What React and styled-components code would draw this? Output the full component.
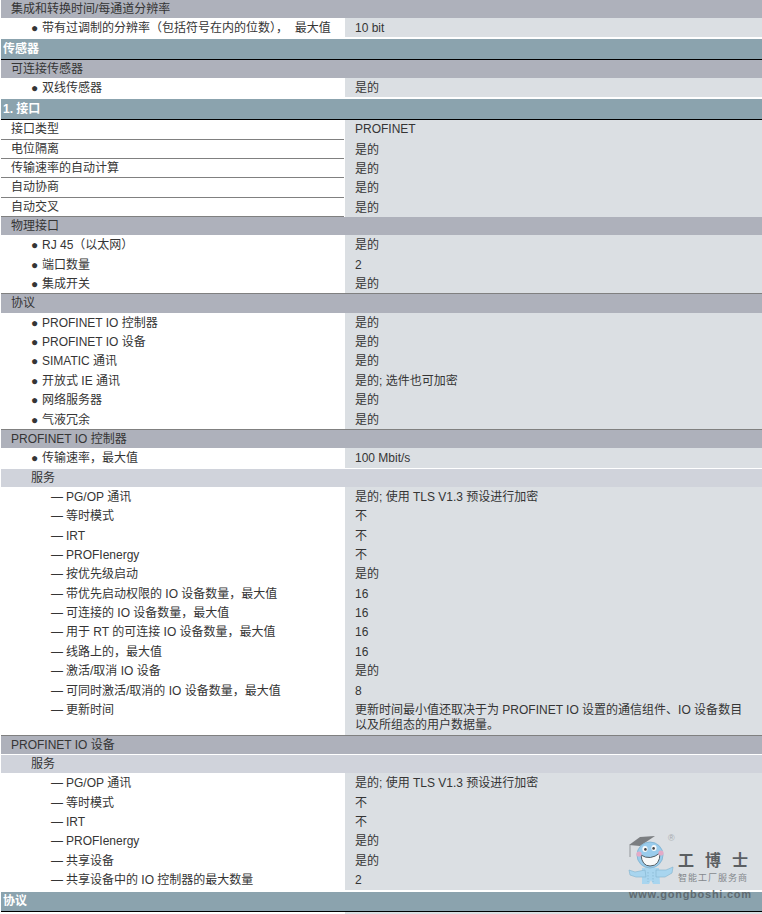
import React from 'react';
import styled, { createGlobalStyle } from 'styled-components';

const Global = createGlobalStyle`
  html, body { margin: 0; padding: 0; background: #fff; }
  body { font-family: "Liberation Sans", "Noto Sans CJK SC", sans-serif; font-size: 12px; color: #353535; }
`;

const Page = styled.div`
  position: relative;
  width: 762px;
  height: 914px;
  overflow: hidden;
  padding-left: 1px;
  box-sizing: border-box;
`;

const Section = styled.div`
  height: ${p => p.$h}px;
  line-height: ${p => p.$h}px;
  margin-top: 2px;
  padding-left: 2px;
  background: #8ba3ae;
  border-bottom: 1px solid #000;
  color: #fff;
  font-weight: bold;
`;

const Group = styled.div`
  height: ${p => p.$h || 18}px;
  line-height: 18px;
  padding-left: ${p => (p.$light ? 30 : 10)}px;
  margin-top: ${p => p.$mt || 0}px;
  background: ${p => (p.$light ? '#d0d3db' : '#aeb1bb')};
  border-top: ${p => (p.$rule ? '1px solid #808080' : 'none')};
`;

const Row = styled.div`
  display: grid;
  grid-template-columns: 344px 1fr;
  grid-template-rows: ${p => p.$h}px;
`;

const Label = styled.div`
  display: flex;
  gap: 3px;
  padding-left: ${p => ({ plain: 10, bullet: 30, dash: 50 }[p.$kind])}px;
  line-height: ${p => p.$lh}px;
  margin-right: 1px;
  border-bottom: ${p => (p.$rule ? '1px solid #808080' : 'none')};
  white-space: pre;
`;

const Mark = styled.span`
  flex: none;
  width: ${p => (p.$kind === 'bullet' ? 8 : 12)}px;
`;

const Value = styled.div`
  padding: ${p => (p.$wrap ? '3px 15px 0 10px' : '0 10px')};
  line-height: ${p => (p.$wrap ? 15 : p.$lh)}px;
  margin-bottom: ${p => p.$gap || 0}px;
  background: #dbdfe3;
`;

const Watermark = styled.div`
  position: absolute;
  left: 628px;
  top: 834px;
  width: 122px;
  display: flex;
  flex-direction: column;
  opacity: .82;
`;

const MarkRow = styled.div`
  display: flex;
  height: 56px;
`;

const BrandBlock = styled.div`
  display: flex;
  flex-direction: column;
  padding-top: 17px;
`;

const Brand = styled.div`
  font-family: "Liberation Serif", "Noto Sans CJK SC", serif;
  font-size: 16px;
  font-weight: 700;
  letter-spacing: 11px;
  line-height: 19px;
  color: #3f4346;
  white-space: nowrap;
`;

const Slogan = styled.div`
  margin-top: 2px;
  font-family: "Noto Sans CJK SC", sans-serif;
  font-size: 9px;
  letter-spacing: 1px;
  line-height: 11px;
  color: #707478;
  white-space: nowrap;
`;

const Site = styled.div`
  margin: -2px 0 0 1px;
  font-size: 11px;
  font-weight: bold;
  letter-spacing: .74px;
  line-height: 12px;
  color: #565e63;
  white-space: nowrap;
`;

const lineFor = (kind, h) => {
  if (kind === 'bullet') return 20;
  if (kind === 'dash') return Math.min(h, 20) + 2;
  return h;
};

const S = (text, h = 20) => ({ t: 's', text, h });
const G = (text, o = {}) => ({ t: 'g', text, ...o });
const R = (kind, l, v, h = 19, o = {}) => ({ t: 'r', kind, l, v, h, lh: lineFor(kind, h), ...o });
const P = (l, v, h, vlh = 20) => R('plain', l, v, h, { rule: true, lh: 19, vlh });

const rows = [
  G('集成和转换时间/每通道分辨率'),
  R('bullet', '带有过调制的分辨率（包括符号在内的位数），  最大值', '10 bit', 19, { lh: 21 }),
  S('传感器'),
  G('可连接传感器'),
  R('bullet', '双线传感器', '是的'),
  S('1. 接口'),
  P('接口类型', 'PROFINET', 20, 19),
  P('电位隔离', '是的', 19),
  P('传输速率的自动计算', '是的', 19),
  P('自动协商', '是的', 20),
  P('自动交叉', '是的', 19),
  G('物理接口'),
  R('bullet', 'RJ 45（以太网）', '是的', 20),
  R('bullet', '端口数量', '2'),
  R('bullet', '集成开关', '是的'),
  G('协议', { rule: true, h: 19 }),
  R('bullet', 'PROFINET IO 控制器', '是的'),
  R('bullet', 'PROFINET IO 设备', '是的'),
  R('bullet', 'SIMATIC 通讯', '是的', 20),
  R('bullet', '开放式 IE 通讯', '是的; 选件也可加密'),
  R('bullet', '网络服务器', '是的', 20),
  R('bullet', '气液冗余', '是的'),
  G('PROFINET IO 控制器', { rule: true }),
  R('bullet', '传输速率，最大值', '100 Mbit/s', 21, { gap: 1, lh: 20 }),
  G('服务', { light: true }),
  R('dash', 'PG/OP 通讯', '是的; 使用 TLS V1.3 预设进行加密'),
  R('dash', '等时模式', '不'),
  R('dash', 'IRT', '不', 20),
  R('dash', 'PROFIenergy', '不'),
  R('dash', '按优先级启动', '是的'),
  R('dash', '带优先启动权限的 IO 设备数量，最大值', '16', 20),
  R('dash', '可连接的 IO 设备数量，最大值', '16'),
  R('dash', '用于 RT 的可连接 IO 设备数量，最大值', '16'),
  R('dash', '线路上的，最大值', '16', 20),
  R('dash', '激活/取消 IO 设备', '是的'),
  R('dash', '可同时激活/取消的 IO 设备数量，最大值', '8', 20),
  R('dash', '更新时间', '更新时间最小值还取决于为 PROFINET IO 设置的通信组件、IO 设备数目以及所组态的用户数据量。', 35, { wrap: true, lh: 21 }),
  G('PROFINET IO 设备', { rule: true }),
  G('服务', { light: true, mt: 1 }),
  R('dash', 'PG/OP 通讯', '是的; 使用 TLS V1.3 预设进行加密'),
  R('dash', '等时模式', '不', 20),
  R('dash', 'IRT', '不'),
  R('dash', 'PROFIenergy', '是的'),
  R('dash', '共享设备', '是的', 20),
  R('dash', '共享设备中的 IO 控制器的最大数量', '2', 20, { lh: 20 }),
  S('协议', 19),
  R('plain', '', '', 4),
];

const Logo = () => (
  <Watermark>
    <MarkRow>
      <svg width="50" height="56" viewBox="0 0 50 56" style={{ flex: 'none' }}>
        <path d="M1 11 L12 3 L27 2 L18 8 L12 12 Z" fill="#66696c" />
        <path d="M2 11 V23" stroke="#85898c" strokeWidth="1" fill="none" />
        <path d="M14 34 H31 L32 50 H25 L23 46 L21 50 H14 Z" fill="#9ed4f2" />
        <path d="M17 36 L7 38 L1 36 L2 41 L8 43 L18 43 Z M28 36 L38 36 L45 33 L44 39 L37 43 L28 43 Z" fill="#9ed4f2" stroke="#6fa9c9" strokeWidth=".6" />
        <path d="M20 38 V48 M25 38 V48" stroke="#6fa9c9" strokeWidth=".7" strokeDasharray="1.5 1.5" />
        <circle cx="22" cy="21" r="13" fill="#8cc8ee" stroke="#6aa7cc" strokeWidth=".8" />
        <path d="M13 21 Q22 27 32 19 Q32 32 22 32 Q14 32 13 21 Z" fill="#fff" stroke="#37434a" strokeWidth="1" />
        <ellipse cx="17" cy="15" rx="2.6" ry="3" fill="#fff" />
        <ellipse cx="26" cy="14" rx="2.6" ry="3" fill="#fff" />
        <circle cx="17.4" cy="15.4" r="1.3" fill="#222" />
        <circle cx="25.6" cy="14.4" r="1.3" fill="#222" />
        <circle cx="11" cy="20" r="2.6" fill="#e79fc0" />
        <circle cx="33" cy="19" r="2.6" fill="#e79fc0" />
        <text x="40" y="7" fontSize="9" fontFamily="Liberation Sans" fill="#9a9ea2">®</text>
      </svg>
      <BrandBlock>
        <Brand>工博士</Brand>
        <Slogan>智能工厂服务商</Slogan>
      </BrandBlock>
    </MarkRow>
    <Site>www.gongboshi.com</Site>
  </Watermark>
);

export default function App() {
  return (
    <Page>
      <Global />
      {rows.map((r, i) => {
        if (r.t === 's') return <Section key={i} $h={r.h}>{r.text}</Section>;
        if (r.t === 'g') return <Group key={i} $h={r.h} $light={r.light} $mt={r.mt} $rule={r.rule}>{r.text}</Group>;
        return (
          <Row key={i} $h={r.h}>
            <Label $kind={r.kind} $lh={r.lh} $rule={r.rule}>
              {r.kind !== 'plain' && <Mark $kind={r.kind}>{r.kind === 'bullet' ? '●' : '—'}</Mark>}
              {r.l}
            </Label>
            <Value $lh={r.vlh || r.lh} $wrap={r.wrap} $gap={r.gap}>{r.v}</Value>
          </Row>
        );
      })}
      <Logo />
    </Page>
  );
}
